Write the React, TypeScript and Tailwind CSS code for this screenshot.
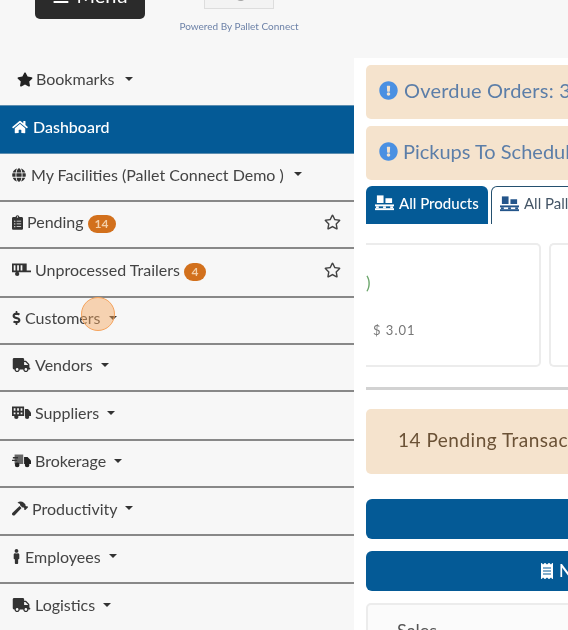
import React from 'react';
import {
  FaStar,
  FaRegStar,
  FaHome,
  FaGlobe,
  FaClipboardList,
  FaTruck,
  FaHammer,
  FaMale,
  FaDollarSign,
  FaExclamationCircle,
  FaReceipt,
} from 'react-icons/fa';

const font = { fontFamily: 'Lato, "Open Sans", sans-serif' };

const Caret = ({ gap = 'ml-[4px]' }: { gap?: string }) => (
  <span className={`${gap} mt-[-1px] inline-block h-0 w-0 border-x-[4px] border-t-[4px] border-x-transparent border-t-[#333]`} />
);

const PalletIcon = ({ className }: { className: string }) => (
  <svg viewBox="0 0 20 16" className={className} fill="currentColor">
    <rect x="2" y="0" width="7" height="8" />
    <rect x="11" y="3" width="7" height="5" />
    <rect x="0" y="9.5" width="20" height="2" />
    <rect x="1" y="11.5" width="3" height="2" />
    <rect x="8.5" y="11.5" width="3" height="2" />
    <rect x="16" y="11.5" width="3" height="2" />
    <rect x="0" y="13.5" width="20" height="2" />
  </svg>
);

// slatted trailer, no cab
const TrailerIcon = ({ className }: { className: string }) => (
  <svg viewBox="0 0 22 15" className={className} fill="currentColor">
    <path d="M0 0h17v10H0zM2 2v6h2V2zm4 0v6h2V2zm4 0v6h2V2zM17 8h5v2h-5z" fillRule="evenodd" />
    <circle cx="6" cy="12" r="2.5" />
  </svg>
);

// slatted box with a cab
const SupplierIcon = ({ className }: { className: string }) => (
  <svg viewBox="0 0 22 15" className={className} fill="currentColor">
    <path d="M0 0h14v11H0zM2 2v3h2V2zm4 0v3h2V2zm4 0v3h2V2zM2 7v2h2V7zm4 0v2h2V7zm4 0v2h2V7z" fillRule="evenodd" />
    <path d="M15 3h3.5L22 7v4h-7z" />
    <circle cx="5" cy="12" r="2.5" />
    <circle cx="17.5" cy="12" r="2.5" />
  </svg>
);

// truck with a paler box
const BrokerageIcon = ({ className }: { className: string }) => (
  <svg viewBox="0 0 22 15" className={className}>
    <path d="M3 0h10v11H3z" fill="#666" />
    <path d="M1 3h6v1.500H1zM0 6h6v1.500H0z" fill="#333" />
    <path d="M14 3h4l4 4v4h-8z" fill="#222" />
    <circle cx="6" cy="12" r="2.700" fill="#222" />
    <circle cx="17.500" cy="12" r="2.700" fill="#222" />
  </svg>
);

const navItems = [
  { label: 'Pending', icon: <FaClipboardList className="h-[15px] w-[11px]" />, rowClass: 'h-[47px]', badge: '14', star: true },
  { label: 'Unprocessed Trailers', icon: <TrailerIcon className="h-[14px] w-[19px]" />, rowClass: 'h-[49px]', badge: '4', star: true },
  { label: 'Customers', icon: <FaDollarSign className="h-[14px] w-[9px]" />, rowClass: 'h-[47px]', caret: true },
  { label: 'Vendors', icon: <FaTruck className="h-[14px] w-[19px]" />, rowClass: 'h-[47px]', caret: true },
  { label: 'Suppliers', icon: <SupplierIcon className="h-[14px] w-[19px]" />, rowClass: 'h-[49px]', caret: true },
  { label: 'Brokerage', icon: <BrokerageIcon className="h-[14px] w-[19px]" />, rowClass: 'h-[47px]', caret: true },
  { label: 'Productivity', icon: <FaHammer className="h-[15px] w-[16px]" />, rowClass: 'h-[48px]', caret: true },
  { label: 'Employees', icon: <FaMale className="h-[15px] w-[9px]" />, rowClass: 'h-[48px]', caret: true },
  { label: 'Logistics', icon: <FaTruck className="h-[14px] w-[19px]" />, rowClass: 'h-[47px]', caret: true },
];

const Sidebar = () => (
  <aside className="w-[354px] shrink-0 text-[16px] text-[#444]">
    <div className="flex h-[47px] items-center gap-[3px] pb-[5px] pl-[17px]">
      <FaStar className="h-[15px] w-[16px] text-[#222]" />
      <span>Bookmarks</span>
      <Caret gap="ml-[7px]" />
    </div>
    <div className="flex h-[49px] items-center gap-[5px] border-y border-[#5d8eb0] bg-[#045a96] pb-[5px] pl-[12px] font-medium text-white">
      <FaHome className="h-[14px] w-[16px]" />
      <span>Dashboard</span>
    </div>
    <div className="flex h-[48px] items-center gap-[5px] border-b-2 border-[#888] pb-[5px] pl-[12px]">
      <FaGlobe className="h-[14px] w-[14px] text-[#333]" />
      <span>My Facilities (Pallet Connect Demo )</span>
      <Caret gap="ml-[5px]" />
    </div>
    {navItems.map((item, i) => (
      <div key={item.label} className={`flex items-center gap-[4px] ${item.rowClass} pb-[5px] pl-[12px] ${i < navItems.length - 1 ? 'border-b-2 border-[#888]' : ''}`}>
        <span className="text-[#333]">{item.icon}</span>
        <span>{item.label}</span>
        {item.badge && (
          <span className="mt-[3px] flex h-[18px] min-w-[22px] items-center justify-center rounded-full bg-[#d2701c] px-[7px] text-[12px] font-bold text-[#f3cfa8]">{item.badge}</span>
        )}
        {item.caret && <Caret />}
        {item.star && <FaRegStar className="mr-[13px] ml-auto h-[16px] w-[17px] text-[#444]" />}
      </div>
    ))}
  </aside>
);

const Main = () => (
  <main className="min-w-0 flex-1 overflow-hidden bg-white pt-[7px] pl-[12px]">
    <div className="w-[400px]">
      <div className="flex h-[54px] items-center gap-[6px] rounded-[5px] bg-[#f5e3cd] pb-[4px] pl-[13px] text-[20px] tracking-[0.2px] text-[#5c7ea8]">
        <FaExclamationCircle className="h-[19px] w-[19px] text-[#4a90e2]" />
        <span>Overdue Orders: 3</span>
      </div>
      <div className="mt-[7px] flex h-[54px] items-center gap-[5px] rounded-[5px] bg-[#f5e3cd] pb-[4px] pl-[13px] text-[20px] text-[#5c7ea8]">
        <FaExclamationCircle className="h-[19px] w-[19px] text-[#4a90e2]" />
        <span>Pickups To Schedule</span>
      </div>
      <div className="mt-[6px] flex h-[38px] items-start gap-[3px] text-[15px]">
        <div className="flex h-[38px] w-[122px] items-center gap-[5px] rounded-t-[6px] bg-[#045a96] pb-[4px] pl-[9px] font-medium text-white">
          <PalletIcon className="h-[16px] w-[19px]" />
          <span>All Products</span>
        </div>
        <div className="flex h-[38px] items-center gap-[5px] rounded-t-[6px] border-x border-t border-[#24506f] pb-[4px] pl-[8px] text-[#456]">
          <PalletIcon className="h-[16px] w-[19px] text-[#24558a]" />
          <span>All Pallets</span>
        </div>
      </div>
      <div className="mt-[19px] flex gap-[8px]">
        <div className="flex h-[124px] w-[175px] flex-col rounded-r-[5px] border-y-2 border-r-2 border-[#ececec]">
          <span className="mt-[26px] text-[17px] leading-[24px] text-[#6aa56a]">)</span>
          <span className="mt-[26px] pl-[7px] text-[13px] tracking-[1px] text-[#777]">$ 3.01</span>
        </div>
        <div className="h-[124px] w-[100px] rounded-l-[5px] border-y-2 border-l-2 border-[#ececec]" />
      </div>
      <div className="mt-[20px] h-[3px] bg-[#d2d2d2]" />
      <div className="mt-[19px] flex h-[65px] items-center rounded-[5px] bg-[#f5e3cd] pb-[3px] pl-[32px] text-[19px] tracking-[0.5px] text-[#6b5236]">
        14 Pending Transactions
      </div>
      <div className="mt-[25px] h-[40px] rounded-[6px] bg-[#045a96]" />
      <div className="mt-[12px] flex h-[40px] items-center gap-[5px] rounded-[6px] bg-[#045a96] pl-[174px] text-[17px] font-medium text-white">
        <FaReceipt className="h-[16px] w-[14px]" />
        <span>New</span>
      </div>
      <div className="mt-[12px] h-[60px] rounded-[5px] border-2 border-[#ececec] bg-[#fbfbfb] pt-[12px] pl-[29px] text-[18px] text-[#555]">Sales</div>
    </div>
  </main>
);

export default function App() {
  return (
    <div className="relative h-[630px] w-[568px] overflow-hidden bg-[#f7f7f7] blur-[0.5px]" style={font}>
      <header className="flex h-[58px] items-start">
        <div className="mt-[-19px] ml-[35px] flex h-[38px] w-[110px] items-center justify-center gap-[6px] rounded-[5px] bg-[#2b2b2b] pb-[10px] text-[20px] text-white">
          <span>☰</span>
          <span>Menu</span>
        </div>
        <div className="ml-[35px] flex w-[118px] flex-col items-center">
          <div className="mt-[-20px] flex h-[29px] w-[70px] items-center justify-center border border-[#ddd] bg-[#f3f3f3] pb-[6px] text-[17px] text-[#aaa]">logo</div>
          <span className="mt-[10px] text-[10px] whitespace-nowrap text-[#6d82a8]">Powered By Pallet Connect</span>
        </div>
      </header>
      <div className="flex">
        <Sidebar />
        <Main />
      </div>
      {/* click marker over the Customers row */}
      <div className="absolute top-[297px] left-[81px] h-[34px] w-[34px] rounded-full border border-[#f5a35c] bg-[#f5a35c]/45" />
    </div>
  );
}
